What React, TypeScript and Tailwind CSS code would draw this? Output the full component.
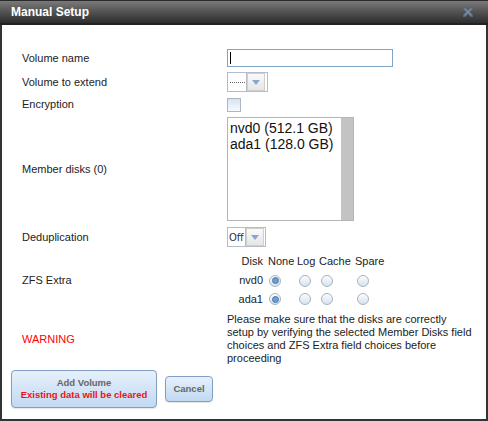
import React from 'react';

const font = { fontFamily: '"Liberation Sans", Arial, sans-serif' };

function Radio({ checked }: { checked?: boolean }) {
  return (
    <div className="w-[12px] h-[12px] rounded-full border border-[#a7b3bf] bg-gradient-to-b from-[#fbfcfd] to-[#d6e3ee] flex items-center justify-center">
      {checked && <div className="w-[7px] h-[7px] rounded-full border border-[#4a7aa8] bg-[#6b9fd0]" />}
    </div>
  );
}

function Arrow() {
  return (
    <div className="w-[18px] h-[18px] border border-[#cfcfcf] bg-gradient-to-b from-[#fafafa] to-[#e6e6e6] flex items-center justify-center">
      <svg width="8" height="5" viewBox="0 0 8 5">
        <path d="M0 0 H8 L4 5 Z" fill="#8ba6cc" />
      </svg>
    </div>
  );
}

function Row({ label, h, className = '', children }: { label: React.ReactNode; h: string; className?: string; children: React.ReactNode }) {
  return (
    <div className={`flex items-center ${h} ${className}`}>
      <div className="w-[205px] shrink-0 text-[11px] text-[#222]">{label}</div>
      <div className="flex-1 h-full flex items-center">{children}</div>
    </div>
  );
}

const disks = ['nvd0', 'ada1'];

export default function App() {
  return (
    <div className="w-[488px] h-[421px] bg-[#333] flex flex-col" style={font}>
      <div className="h-[25px] shrink-0 border-t border-[#2a2a2a] border-b-2 border-b-[#222] bg-gradient-to-b from-[#7a7a7a] to-[#2e2e2e] flex items-center justify-between pl-[11px] pr-[15px]">
        <span className="text-white font-bold text-[12px]">Manual Setup</span>
        <svg width="10" height="10" viewBox="0 0 10 10">
          <path d="M1 1 L9 9 M9 1 L1 9" stroke="#56687a" strokeWidth="3.2" strokeLinecap="square" />
          <path d="M1.5 1.5 L8.5 8.5 M8.5 1.5 L1.5 8.5" stroke="#7e90a2" strokeWidth="1.2" />
        </svg>
      </div>
      <div className="flex-1 bg-white mx-[2px] mb-[2px] flex flex-col pt-[24px] pl-[20px]">
        <Row label="Volume name" h="h-[18px]">
          <div className="w-[166px] h-[18px] border border-[#7fa6c7] flex items-center pl-[2px]">
            <div className="w-[1px] h-[12px] bg-black" />
          </div>
        </Row>
        <Row label="Volume to extend" h="h-[20px]" className="mt-[5px]">
          <div className="w-[41px] h-[20px] border border-[#b7bdc8] flex items-center">
            <div className="w-[19px] h-full border-r border-[#b7bdc8] flex items-center justify-center">
              <div className="w-[15px] border-t border-dotted border-[#666]" />
            </div>
            <Arrow />
          </div>
        </Row>
        <Row label="Encryption" h="h-[13px]" className="mt-[6px]">
          <div className="w-[14px] h-[14px] border border-[#aeb6c2] bg-gradient-to-b from-[#d6e4f1] to-[#f7fafc]" />
        </Row>
        <Row label="Member disks (0)" h="h-[104px]" className="mt-[6px]">
          <div className="w-[127px] h-[104px] border border-[#b5b5b5] flex">
            <div className="flex-1 pt-[2px] pl-[2px] text-[14px] leading-[16px] text-[#111]">
              <div>nvd0 (512.1 GB)</div>
              <div>ada1 (128.0 GB)</div>
            </div>
            <div className="w-[12px] bg-[#c3c3c3]" />
          </div>
        </Row>
        <Row label="Deduplication" h="h-[20px]" className="mt-[6px]">
          <div className="w-[39px] h-[20px] border border-[#b7bdc8] flex items-center">
            <div className="w-[18px] h-full border-r border-[#b7bdc8] flex items-center pl-[1px] text-[10px] text-[#333]" style={{ fontFamily: '"DejaVu Sans", sans-serif' }}>
              Off
            </div>
            <Arrow />
          </div>
        </Row>
        <Row label="ZFS Extra" h="h-[56px]" className="mt-[5px]">
          <div className="ml-[10px] flex flex-col text-[11px] text-[#222]">
            <div className="flex h-[19px] items-center whitespace-nowrap">
              <div className="w-[29px] text-right pr-[3px]">Disk</div>
              <div className="w-[30px] pl-[2px]">None</div>
              <div className="w-[22px] pl-[1px]">Log</div>
              <div className="w-[36px] pl-[1px]">Cache</div>
              <div className="w-[32px] pl-[1px]">Spare</div>
            </div>
            {disks.map((d, i) => (
              <div key={d} className={`flex items-center ${i === 0 ? 'h-[19px]' : 'h-[18px]'}`}>
                <div className="w-[29px] text-right pr-[3px]">{d}</div>
                <div className="w-[30px] pl-[3px]"><Radio checked /></div>
                <div className="w-[22px] pl-[3px]"><Radio /></div>
                <div className="w-[36px] pl-[3px]"><Radio /></div>
                <div className="w-[32px] pl-[3px]"><Radio /></div>
              </div>
            ))}
          </div>
        </Row>
        <Row label={<span className="text-[#ff0000] text-[11px]">WARNING</span>} h="h-[52px]" className="mt-[5px]">
          <div className="w-[245px] text-[11px] leading-[13px] text-[#222]">
            Please make sure that the disks are correctly setup by verifying the selected Member Disks field choices and ZFS Extra field choices before proceeding
          </div>
        </Row>
        <div className="flex items-center gap-[8px] mt-[5px] -ml-[11px]">
          <button className="w-[146px] h-[38px] px-0 whitespace-nowrap rounded-[4px] border border-[#7fa0c3] bg-gradient-to-b from-[#e6f0fb] to-[#c2d9f2] flex flex-col items-center justify-center text-[9.5px] font-bold leading-[12px] shadow-[0_1px_1px_rgba(0,0,0,0.1)]">
            <span className="text-[#666]">Add Volume</span>
            <span className="text-[#ee1111]">Existing data will be cleared</span>
          </button>
          <button className="w-[48px] h-[26px] rounded-[4px] border border-[#7fa0c3] bg-gradient-to-b from-[#e6f0fb] to-[#c2d9f2] text-[9.5px] font-bold text-[#666] shadow-[0_1px_1px_rgba(0,0,0,0.1)]">
            Cancel
          </button>
        </div>
      </div>
    </div>
  );
}
